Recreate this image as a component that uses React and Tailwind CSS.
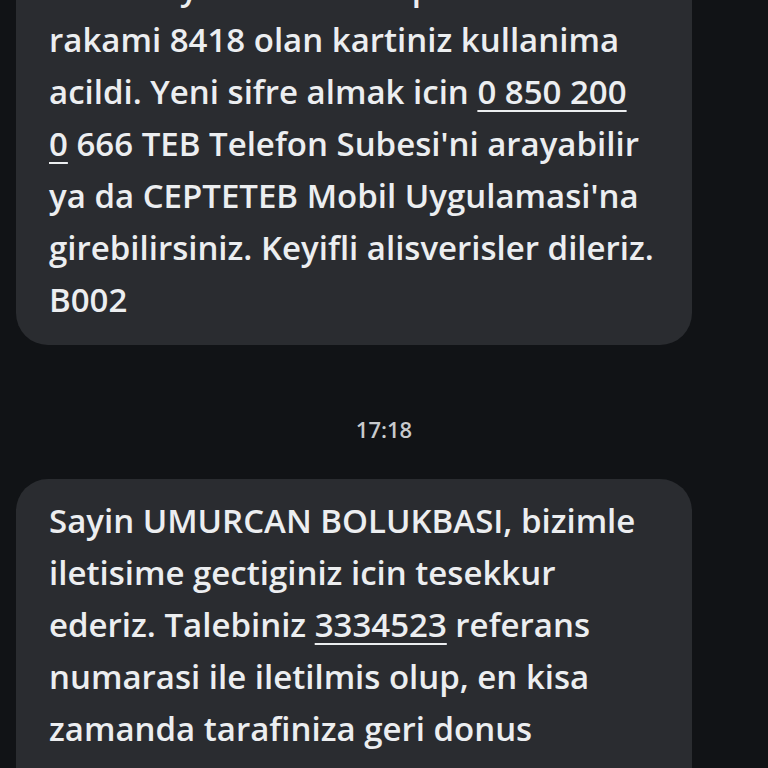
export default function App() {
  const first = [
    <>Kartiniz yenilenmis olup son dort</>,
    <>rakami 8418 olan kartiniz kullanima</>,
    <>
      acildi. Yeni sifre almak icin <u className="underline decoration-2 underline-offset-[6px]">0 850 200</u>
    </>,
    <>
      <u className="underline decoration-2 underline-offset-[6px]">0</u> 666 TEB Telefon Subesi'ni arayabilir
    </>,
    <>ya da CEPTETEB Mobil Uygulamasi'na</>,
    <>girebilirsiniz. Keyifli alisverisler dileriz.</>,
    <>B002</>,
  ];
  const second = [
    <>Sayin UMURCAN BOLUKBASI, bizimle</>,
    <>iletisime gectiginiz icin tesekkur</>,
    <>
      ederiz. Talebiniz <u className="underline decoration-2 underline-offset-[6px]">3334523</u> referans
    </>,
    <>numarasi ile iletilmis olup, en kisa</>,
    <>zamanda tarafiniza geri donus</>,
    <>yapilacaktir. Saygilarimizla TEB</>,
  ];

  return (
    <div
      className="h-[768px] w-[768px] overflow-hidden bg-[#111316] text-[#eceef0]"
      style={{ fontFamily: '"Open Sans", "Noto Sans", sans-serif' }}
    >
      <div className="-mt-[54px] flex flex-col">
        <div className="ml-4 w-[676px] rounded-[32px] bg-[#2a2c30] px-[33px] pb-[19px] pt-4 text-[33px] font-semibold leading-[52px]">
          {first.map((l, i) => (
            <div key={i} className="whitespace-nowrap">{l}</div>
          ))}
        </div>
        <div className="flex h-[134px] items-center justify-center pt-[34px] text-[22px] font-semibold text-[#c8cacd]">
          17:18
        </div>
        <div className="ml-4 w-[676px] rounded-[32px] bg-[#2a2c30] px-[33px] pb-[19px] pt-4 text-[33px] font-semibold leading-[52px]">
          {second.map((l, i) => (
            <div key={i} className="whitespace-nowrap">{l}</div>
          ))}
        </div>
      </div>
    </div>
  );
}
